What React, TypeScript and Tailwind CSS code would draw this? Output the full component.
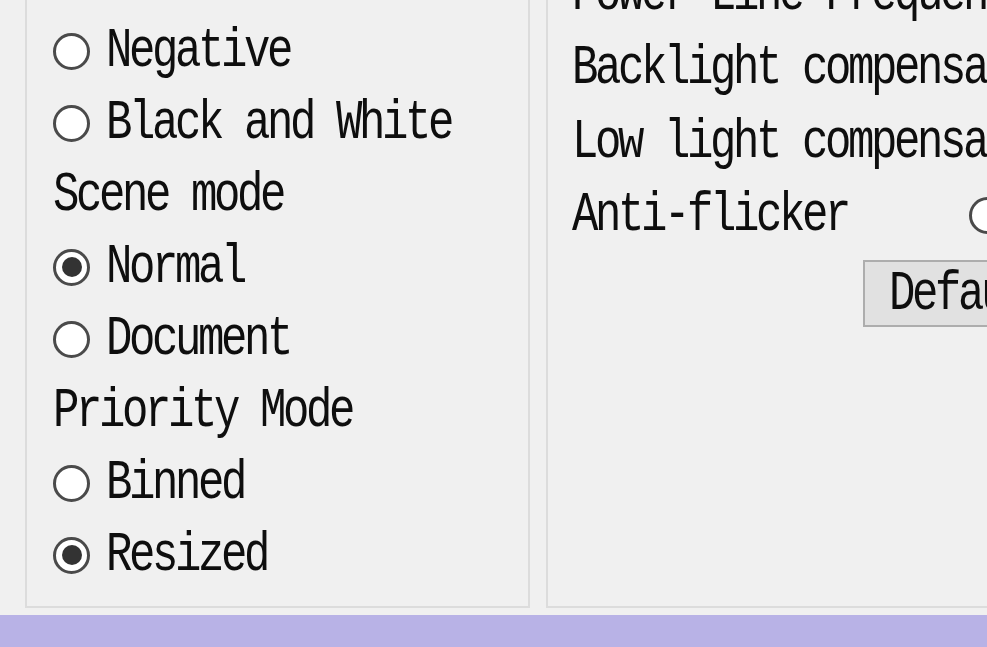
import React from "react";

const mono = "inline-block scale-y-125 font-['Liberation_Mono','DejaVu_Sans_Mono',monospace] text-[44px] tracking-[-3.4px] text-[#0e0e0e] whitespace-pre leading-none";

function Radio({ checked }: { checked?: boolean }) {
  return (
    <span className="w-[37px] h-[37px] shrink-0 rounded-full border-[3px] border-[#4a4a4a] bg-white flex items-center justify-center">
      {checked && <span className="w-[20px] h-[20px] rounded-full bg-[#333]" />}
    </span>
  );
}

function Row({ children }: { children: React.ReactNode }) {
  return <div className="h-[72px] flex items-center">{children}</div>;
}

function Option({ label, checked }: { label: string; checked?: boolean }) {
  return (
    <Row>
      <Radio checked={checked} />
      <span className={`${mono} ml-[16px]`}>{label}</span>
    </Row>
  );
}

function Label({ text }: { text: string }) {
  return (
    <Row>
      <span className={mono}>{text}</span>
    </Row>
  );
}

export default function App() {
  return (
    <div className="w-[987px] h-[647px] bg-[#f0f0f0] overflow-hidden flex flex-col">
      <div className="h-[615px] shrink-0 flex pl-[25px] gap-[16px] pb-[7px]">
        <div className="w-[505px] border-l-2 border-r-2 border-b-2 border-[#dcdcdc] pl-[26px] pt-[15px] overflow-hidden">
          <Option label="Negative" />
          <Option label="Black and White" />
          <Label text="Scene mode" />
          <Option label="Normal" checked />
          <Option label="Document" />
          <Label text="Priority Mode" />
          <Option label="Binned" />
          <Option label="Resized" checked />
        </div>
        <div className="flex-1 border-l-2 border-b-2 border-[#dcdcdc] pl-[24px] overflow-hidden">
          <div className="mt-[-43px]">
            <div className="h-[74px] flex items-center">
              <span className={mono}>Power Line Frequency</span>
            </div>
            <div className="h-[74px] flex items-center">
              <span className={mono}>Backlight compensation</span>
            </div>
            <div className="h-[74px] flex items-center">
              <span className={mono}>Low light compensation</span>
            </div>
            <div className="h-[72px] flex items-center">
              <span className={`${mono} w-[397px] shrink-0`}>Anti-flicker</span>
              <Radio />
            </div>
            <div className="flex mt-[9px] pl-[291px]">
              <div className="h-[67px] w-[240px] shrink-0 border-2 border-[#adadad] bg-[#e1e1e1] flex items-center pl-[24px]">
                <span className={mono}>Default</span>
              </div>
            </div>
          </div>
        </div>
      </div>
      <div className="flex-1 bg-[#b8b2e6]" />
    </div>
  );
}
